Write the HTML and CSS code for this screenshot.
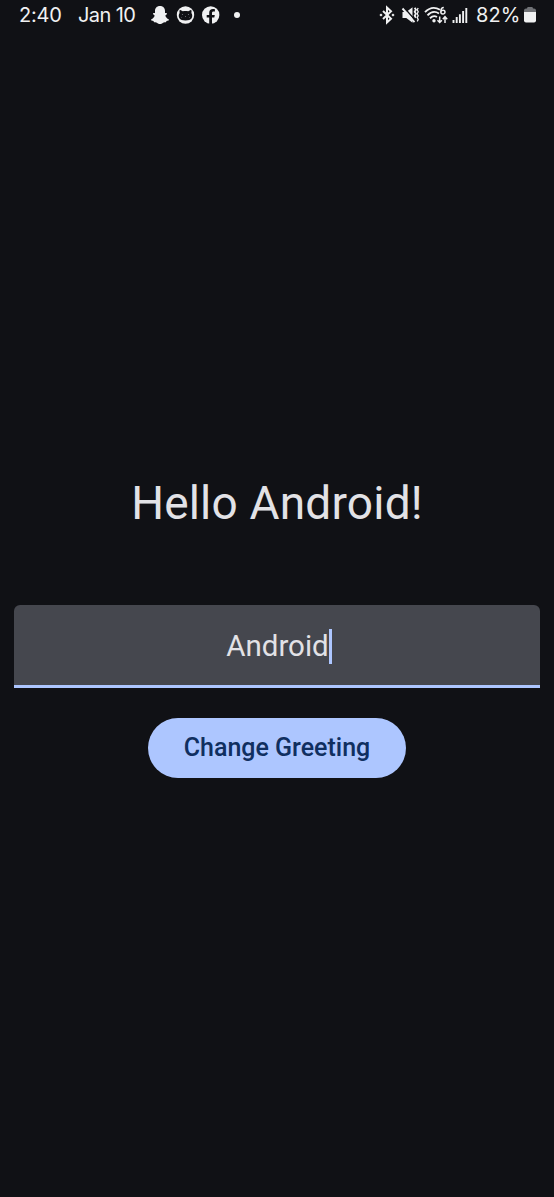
FILE: index.html
```html
<!DOCTYPE html>
<html lang="en">
<head>
<meta charset="utf-8">
<title>Hello Android</title>
<link rel="stylesheet" href="styles.css">
</head>
<body>
<header class="status">
  <div class="status-left">
    <span class="clock">2:40</span>
    <span class="date">Jan 10</span>
    <svg class="notifications" width="92" height="20" viewBox="0 0 92 20" fill="#f0f1f2">
      <path d="M10 1C6.700 1 5 3.300 5 6v2.100c-.8 0-2-.2-2 .7 0 .8 1.400 1.200 1.700 2C4 12.700 2.500 14 1 14.400c-.3 1 1.200 1.300 2.500 1.600.3.600.2 1.300 1 1.300.9-.1 1.900-.1 2.800.6.8.6 1.500 1.200 2.700 1.200s1.900-.6 2.700-1.200c.9-.7 1.900-.7 2.800-.6.8 0 .7-.7 1-1.300 1.300-.3 2.800-.6 2.500-1.600-1.500-.4-3-1.700-3.700-3.600.3-.8 1.700-1.200 1.700-2 0-.9-1.200-.7-2-.7V6c0-2.700-1.700-5-5-5z"/>
      <circle cx="35.500" cy="10" r="8.700"/>
      <path fill="#101115" d="M29.800 4.800l3 1.500c1.800-.5 3.600-.5 5.400 0l3-1.500c.4 1.200.5 2.100.2 3.200 1.100 1.500 1.100 3.700.2 5.200-1 1.600-3.200 2.200-6.100 2.200s-5.100-.6-6.100-2.200c-.9-1.500-.9-3.700.2-5.200-.3-1.100-.2-2 .2-3.200z"/>
      <g fill="#777a80"><circle cx="32.500" cy="9.500" r=".6"/><circle cx="38.500" cy="9.500" r=".6"/><circle cx="35.500" cy="11.500" r=".5"/><circle cx="31.500" cy="12.500" r=".4"/><circle cx="39.500" cy="12.500" r=".4"/></g>
      <circle cx="60.700" cy="10" r="8.700"/>
      <path fill="#101115" d="M59.200 19v-6.400h-2.500v-2.700h2.500V7.800c0-2.600 1.500-3.800 3.700-3.800.8 0 1.500.1 2 .2v2.300h-1.300c-1.200 0-1.600.6-1.600 1.500v1.900h2.800l-.5 2.700H62V19z"/>
      <circle cx="87" cy="10" r="3"/>
    </svg>
  </div>
  <div class="status-right">
    <svg width="92" height="20" viewBox="0 0 92 20" fill="none" stroke="#f0f1f2">
      <path stroke-width="2" d="M4 6l8 7.700-4 3.800v-15l4 3.800L4 14"/>
      <path fill="#f0f1f2" stroke="none" d="M.4 10L2 8.400 3.600 10 2 11.600zM12.400 10L14 8.400l1.600 1.600-1.600 1.600z"/>
      <path fill="#f0f1f2" stroke="none" d="M23.500 7h3.800l6.200-4.700v15.400L27.300 13h-3.800z"/>
      <path stroke="#101115" stroke-width="1.500" d="M25.200 2.800l11 12.500"/>
      <path stroke-width="1.900" d="M23.500 3.500l12 13.700"/>
      <path stroke-width="1.800" d="M35.700 2.800l1.200 2-1.200 2 1.200 2-1.200 2 1.200 2"/>
      <path stroke-width="1.300" d="M39.200 3l-1 1.800 1 1.900-1 2 1 2-1 1.900 1 2-1 1.800"/>
      <path stroke-width="1.900" d="M46 7.200Q53 0 61 4.800M48.500 10.300Q54 4.500 60 8.500M51 13.200Q54.500 9.800 58 12"/>
      <circle cx="55" cy="15.800" r="1.700" fill="#f0f1f2" stroke="none"/>
      <path stroke-width="1.500" d="M64.800 2.500c-2.600 0-3 2-3 4.200 0 3.100 4.200 2.900 4.200.4 0-2.400-3.700-2.400-4.100-.2"/>
      <path stroke-width="1.500" d="M60.700 11.500v6m-2.200-2.300l2.200 2.300 2.200-2.300M66 18v-6.500m-2.200 2.700l2.200-2.500 2.200 2.500"/>
      <path stroke-width="1.900" d="M74.500 15v3M77.700 12v6M80.900 9.200V18M84.100 6v12M87.300 3v15"/>
    </svg>
    <span class="percent">82%</span>
    <svg class="battery" width="12" height="18" viewBox="0 0 12 18">
      <path fill="#707276" d="M4 1h4q1 0 1 1.500h1q2 0 2 2V6H0V4.500q0-2 2-2h1Q3 1 4 1z"/>
      <path fill="#f0f1f2" d="M0 6h12v8.500q0 2-2 2H2q-2 0-2-2z"/>
    </svg>
  </div>
</header>
<main class="content">
  <h1 class="greeting">Hello Android!</h1>
  <div class="field"><span class="value">Android</span><span class="caret"></span></div>
  <button class="action" type="button">Change Greeting</button>
</main>
</body>
</html>
```
FILE: styles.css
```css
* { box-sizing: border-box; }

body {
  margin: 0;
  height: 1197px;
  display: flex;
  flex-direction: column;
  background: #101115;
  color: #e2e2e6;
  font-family: Roboto, sans-serif;
  overflow: hidden;
}

.status {
  height: 32px;
  display: flex;
  justify-content: space-between;
  padding: 0 18px 0 19px;
  color: #f0f1f2;
  font: 20px/28px Inter, Roboto, sans-serif;
  white-space: nowrap;
}

.status-left,
.status-right {
  display: flex;
  height: 30px;
  align-items: center;
}

.clock {
  width: 59px;
  letter-spacing: -0.2px;
}

.date {
  width: 72px;
  letter-spacing: -0.6px;
}

.percent {
  width: 44px;
  margin-left: 5px;
  letter-spacing: 0.1px;
}

.battery { margin-left: 4px; }

.content {
  display: flex;
  flex-direction: column;
  align-items: center;
  padding: 443px 14px 0;
}

.greeting {
  margin: 0;
  height: 56px;
  font-size: 46px;
  font-weight: 400;
  line-height: 56px;
  letter-spacing: 0.2px;
  white-space: nowrap;
}

.field {
  width: 100%;
  height: 83px;
  margin-top: 74px;
  padding: 2px 0 0 4px;
  display: flex;
  justify-content: center;
  align-items: center;
  background: #45474e;
  border-bottom: 3px solid #adc6ff;
  border-radius: 6px 6px 0 0;
  font-size: 29.5px;
}

.caret {
  width: 3px;
  height: 35px;
  background: #adc6ff;
}

.action {
  width: 258px;
  height: 60px;
  margin-top: 30px;
  padding: 0;
  border: 0;
  border-radius: 30px;
  background: #adc6ff;
  color: #102f60;
  font: 500 25px/60px Roboto, sans-serif;
  white-space: nowrap;
}
```
